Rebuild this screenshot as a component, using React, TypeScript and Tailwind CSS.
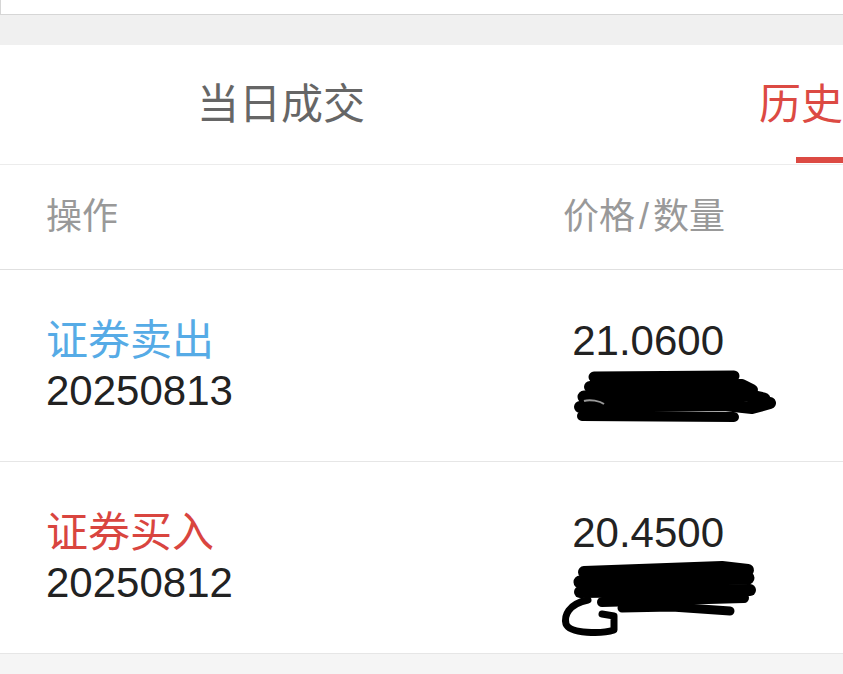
import React from "react";

const FONT = '"Liberation Sans", "Noto Sans CJK SC", sans-serif';

function Scribble1() {
  return (
    <svg width="200" height="56" viewBox="0 0 200 56" className="block overflow-visible">
      <g stroke="#000" strokeLinecap="round" strokeLinejoin="round" fill="none">
        <path d="M20 6 L160 5" strokeWidth="11" />
        <path d="M16 16 L168 14 L178 19" strokeWidth="12" />
        <path d="M10 26 L172 24 L190 28" strokeWidth="13" />
        <path d="M6 36 L150 34 L178 37 L196 32" strokeWidth="12" />
        <path d="M8 45 L160 46" strokeWidth="10" />
      </g>
      <path d="M10 30 C 16 28, 26 30, 30 33" stroke="#fff" strokeWidth="2" opacity="0.6" fill="none" />
    </svg>
  );
}

function Scribble2() {
  return (
    <svg width="200" height="76" viewBox="0 0 200 76" className="block overflow-visible">
      <g stroke="#000" strokeLinecap="round" strokeLinejoin="round" fill="none">
        <path d="M22 10 L160 5 L186 8" strokeWidth="12" />
        <path d="M18 20 L186 16" strokeWidth="13" />
        <path d="M18 30 L188 28" strokeWidth="12" />
        <path d="M40 40 L182 36" strokeWidth="10" />
        <path d="M60 46 L110 45 L168 49" strokeWidth="9" />
        <path d="M26 38 C 6 42, 2 54, 4 62 C 8 72, 40 72, 52 68 L 52 54 L 40 52" strokeWidth="7" />
      </g>
    </svg>
  );
}

function Row({
  action,
  actionColor,
  date,
  price,
  scribble,
}: {
  action: string;
  actionColor: string;
  date: string;
  price: string;
  scribble: React.ReactNode;
}) {
  return (
    <div className="h-[192px] border-b border-[#e6e6e6] flex items-start px-[46px] shrink-0">
      <div className="flex flex-col pt-[45px]">
        <div className={`text-[42px] leading-[52px] ${actionColor}`}>{action}</div>
        <div className="text-[42px] leading-[48px] text-[#222]">{date}</div>
      </div>
      <div className="ml-auto mr-[73px] w-[170px] flex flex-col pt-[47px]">
        <div className="text-[42px] leading-[48px] text-[#222] text-right">{price}</div>
        {scribble}
      </div>
    </div>
  );
}

export default function App() {
  return (
    <div className="w-[843px] h-[674px] overflow-hidden bg-white flex flex-col" style={{ fontFamily: FONT }}>
      <div className="h-[15px] bg-white border-l border-b border-[#d6d6d6] shrink-0" />
      <div className="h-[30px] bg-[#f0f0f0] shrink-0" />
      <div className="h-[120px] border-b border-[#ececec] shrink-0 overflow-hidden">
        <div className="w-[1125px] h-full flex">
          <div className="w-[562px] h-full flex items-center justify-center text-[42px] text-[#666]">当日成交</div>
          <div className="w-[562px] h-full flex items-center justify-center text-[42px] text-[#dc4a43] relative">
            历史成交
            <div className="absolute left-[234px] bottom-[1px] w-[94px] h-[6px] bg-[#dc4a43]" />
          </div>
        </div>
      </div>
      <div className="h-[105px] border-b border-[#e0e0e0] shrink-0 flex items-center px-[46px] text-[36px] text-[#999]">
        <span>操作</span>
        <span className="ml-auto mr-[72px]">
          价格<span className="mx-[4px]">/</span>数量
        </span>
      </div>
      <Row
        action="证券卖出"
        actionColor="text-[#56abe6]"
        date="20250813"
        price="21.0600"
        scribble={<div className="ml-[20px] mt-[6px]"><Scribble1 /></div>}
      />
      <Row
        action="证券买入"
        actionColor="text-[#d9453f]"
        date="20250812"
        price="20.4500"
        scribble={<div className="ml-[8px] mt-[5px]"><Scribble2 /></div>}
      />
      <div className="flex-1 bg-[#f5f5f5]" />
    </div>
  );
}
